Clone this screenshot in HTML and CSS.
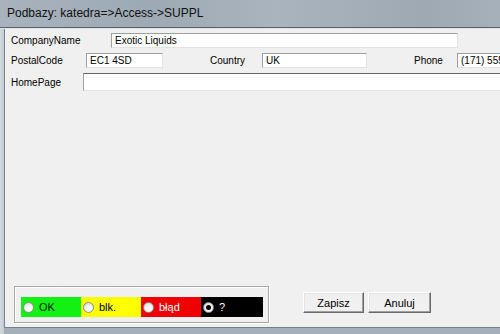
FILE: index.html
```html
<!DOCTYPE html>
<html lang="pl">
<head>
  <meta charset="UTF-8">
  <meta name="viewport" content="width=device-width, initial-scale=1.0">
  <title>Podbazy: katedra=>Access->SUPPL</title>
  <link rel="stylesheet" href="styles.css">
</head>
<body>

<div class="window">
  <div class="titlebar">Podbazy: katedra=&gt;Access-&gt;SUPPL</div>
  <div class="frame">
    <div class="client">
      <div class="form">
        <div class="row row-company">
          <span class="label lbl-company">CompanyName</span>
          <div class="field f-company">Exotic Liquids</div>
        </div>
        <div class="row row-postal">
          <span class="label lbl-postal">PostalCode</span>
          <div class="field f-postal">EC1 4SD</div>
          <span class="label lbl-country">Country</span>
          <div class="field f-country">UK</div>
          <span class="label lbl-phone">Phone</span>
          <div class="field f-phone">(171) 555-2222</div>
        </div>
        <div class="row row-home">
          <span class="label lbl-home">HomePage</span>
          <div class="field f-home"></div>
        </div>
      </div>

      <div class="bottom">
        <div class="status">
          <div class="strip">
            <label class="seg seg-ok"><span class="radio"></span>OK</label>
            <label class="seg seg-blk"><span class="radio"></span>blk.</label>
            <label class="seg seg-err"><span class="radio"></span>błąd</label>
            <label class="seg seg-unk"><span class="radio checked"></span>?</label>
          </div>
        </div>
        <div class="buttons">
          <button class="btn btn-save">Zapisz</button>
          <button class="btn btn-cancel">Anuluj</button>
        </div>
      </div>
    </div>
  </div>
</div>

</body>
</html>
```

FILE: styles.css
```css
body {
  margin: 0;
  font-family: 'Liberation Sans', Arial, sans-serif;
  font-size: 10px;
  color: #000;
  background-color: #a4afba;
}

.window {
  width: 500px;
  height: 334px;
  display: flex;
  flex-direction: column;
  overflow: hidden;
}

.titlebar {
  height: 27px;
  line-height: 26px;
  padding-left: 7px;
  font-size: 12px;
  color: #111;
  background: linear-gradient(90deg, #a8b3be 0%, #9da9b4 30%, #aab4be 55%, #9ea9b4 85%, #a5b0ba 100%);
  border-bottom: 1px solid #56616c;
  flex-shrink: 0;
}

.frame {
  flex: 1;
  display: flex;
  padding-left: 4px;
  padding-bottom: 6px;
  background: linear-gradient(90deg, #d3d9df 0px, #c3cbd3 4px, #a4afba 4px);
  border-top: 1px solid #dfe4e8;
}

.client {
  flex: 1;
  display: flex;
  flex-direction: column;
  justify-content: space-between;
  background-color: #f0f0f0;
  border-left: 1px solid #76808a;
  border-bottom: 1px solid #76808a;
  overflow: hidden;
}

.form {
  padding-top: 4px;
  padding-left: 6px;
}

.row {
  display: flex;
  align-items: center;
  height: 15px;
  margin-bottom: 5px;
  white-space: nowrap;
}

.row-home {
  height: 18px;
  margin-top: 1px;
}

.label {
  flex-shrink: 0;
}

.lbl-company { width: 100px; }
.lbl-postal { width: 75px; }
.lbl-country { width: 52px; margin-left: 47px; }
.lbl-phone { width: 43px; margin-left: 47px; }
.lbl-home { width: 72px; }

.field {
  box-sizing: border-box;
  height: 100%;
  flex-shrink: 0;
  padding: 0 3px;
  line-height: 13px;
  background-color: #fff;
  border: 1px solid;
  border-color: #a0a0a0 #e3e3e3 #e3e3e3 #a0a0a0;
  overflow: hidden;
}

.f-company { width: 347px; }
.f-postal { width: 77px; }
.f-country { width: 105px; }
.f-phone { width: 100px; }
.f-home { width: 430px; border-color: #646464 #e3e3e3 #e3e3e3 #a0a0a0; }

.bottom {
  display: flex;
  align-items: flex-start;
  padding-left: 9px;
  padding-bottom: 4px;
}

.status {
  box-sizing: border-box;
  width: 255px;
  height: 37px;
  padding: 10px 0 0 6px;
  border: 1px solid #a7a7a7;
  box-shadow: inset 1px 1px 0 #fff, 1px 1px 0 #fff;
}

.strip {
  display: flex;
  height: 20px;
}

.seg {
  display: flex;
  align-items: center;
  width: 60px;
  font-size: 11px;
}

.seg-ok { background-color: #14f014; color: #001a00; }
.seg-blk { background-color: #ffff00; color: #000; }
.seg-err { background-color: #f00000; color: #fff; }
.seg-unk { background-color: #000; color: #fff; width: 62px; }

.radio {
  box-sizing: border-box;
  width: 11px;
  height: 11px;
  margin: 0 5px 0 2px;
  border-radius: 50%;
  border: 1px solid #8e8f8f;
  background: radial-gradient(circle at 60% 65%, #ffffff 0%, #f4f4f4 40%, #cfcfcf 100%);
  position: relative;
}

.radio.checked::after {
  content: '';
  position: absolute;
  left: 2px;
  top: 2px;
  width: 5px;
  height: 5px;
  border-radius: 50%;
  background-color: #000;
}

.buttons {
  display: flex;
  gap: 4px;
  margin-left: 34px;
  margin-top: 6px;
}

.btn {
  box-sizing: border-box;
  height: 21px;
  padding: 0;
  font-family: 'Liberation Sans', Arial, sans-serif;
  font-size: 11px;
  color: #000;
  background-color: #f0f0f0;
  border: 1px solid;
  border-color: #fff #696969 #696969 #fff;
  box-shadow: inset -1px -1px 0 #a0a0a0, inset 1px 1px 0 #e3e3e3;
}

.btn-save { width: 61px; }
.btn-cancel { width: 63px; }
```
